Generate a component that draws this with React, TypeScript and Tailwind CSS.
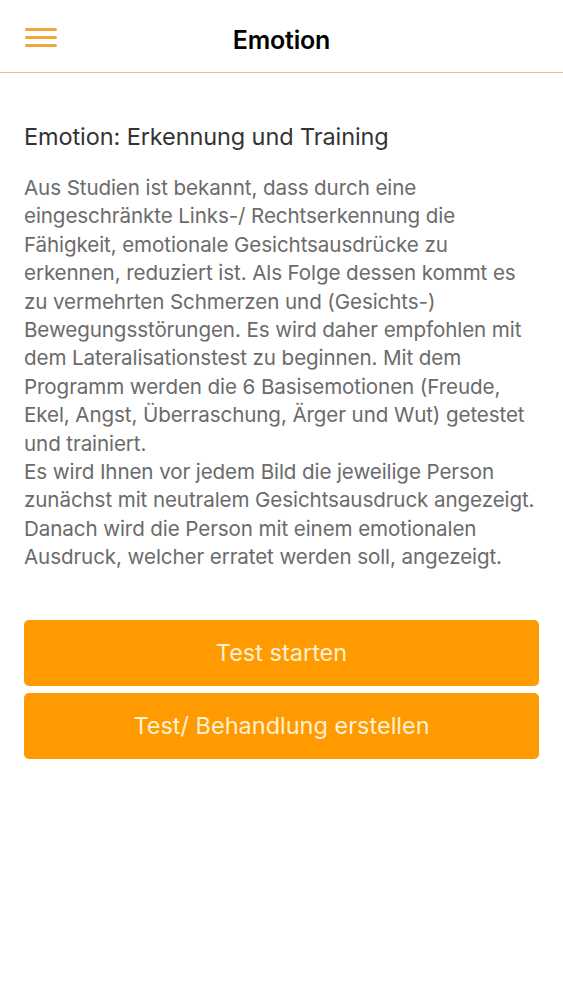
export default function App() {
  return (
    <div className="w-[563px] min-h-[1000px] bg-white" style={{ fontFamily: "Inter, 'Noto Sans', sans-serif" }}>
      <header className="relative h-[73px] flex items-center justify-center border-b border-[#ecc27a]">
        <button className="absolute left-[25px] top-[28px] flex flex-col gap-[5.5px]">
          <span className="block w-[32px] h-[2.5px] bg-[#f0a43a] rounded" />
          <span className="block w-[32px] h-[2.5px] bg-[#f0a43a] rounded" />
          <span className="block w-[32px] h-[2.5px] bg-[#f0a43a] rounded" />
        </button>
        <h1 className="mt-[9px] text-[25px] font-semibold text-black tracking-[-0.2px]">Emotion</h1>
      </header>
      <main className="px-[24px] pt-[49px]">
        <h2 className="text-[23.5px] leading-[30px] text-[#333] tracking-[-0.1px]">Emotion: Erkennung und Training</h2>
        <p className="mt-[22px] text-[20.6px] leading-[28.4px] text-[#6b6b6b] tracking-[-0.1px]">
          Aus Studien ist bekannt, dass durch eine eingeschränkte Links-/ Rechtserkennung die Fähigkeit, emotionale Gesichtsausdrücke zu erkennen, reduziert ist. Als Folge dessen kommt es zu vermehrten Schmerzen und (Gesichts-) Bewegungsstörungen. Es wird daher empfohlen mit dem Lateralisationstest zu beginnen. Mit dem Programm werden die 6 Basisemotionen (Freude, Ekel, Angst, Überraschung, Ärger und Wut) getestet und trainiert.
          <br />
          Es wird Ihnen vor jedem Bild die jeweilige Person zunächst mit neutralem Gesichtsausdruck angezeigt. Danach wird die Person mit einem emotionalen Ausdruck, welcher erratet werden soll, angezeigt.
        </p>
        <div className="mt-[48px] flex flex-col gap-[7px]">
          <button className="h-[66px] w-full rounded-[5px] bg-[#ff9a00] text-[23.5px] text-[#fff0d2]">Test starten</button>
          <button className="h-[66px] w-full rounded-[5px] bg-[#ff9a00] text-[23.5px] text-[#fff0d2]">Test/ Behandlung erstellen</button>
        </div>
      </main>
    </div>
  );
}
